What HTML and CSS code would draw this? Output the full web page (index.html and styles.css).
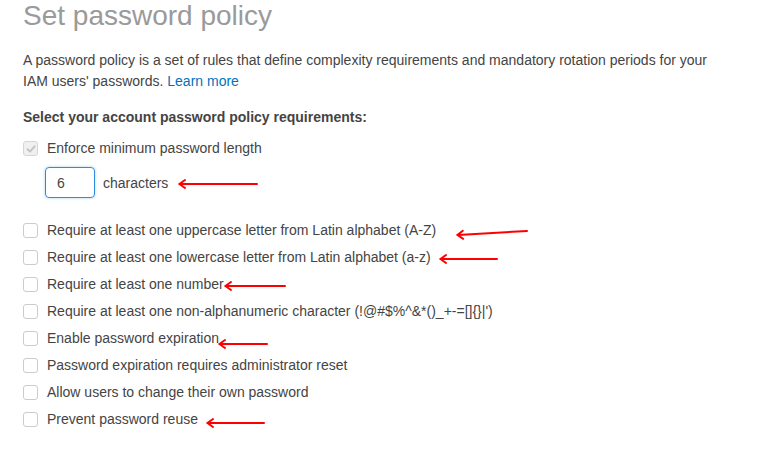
FILE: index.html
```html
<!DOCTYPE html>
<html lang="en">
<head>
<meta charset="utf-8">
<title>Set password policy</title>
<link rel="stylesheet" href="styles.css">
</head>
<body>
<main class="page">
  <h1 class="title">Set password policy</h1>
  <p class="intro">A password policy is a set of rules that define complexity requirements and mandatory rotation periods for your IAM users' passwords. <a class="link" href="#">Learn more</a></p>
  <h2 class="section">Select your account password policy requirements:</h2>

  <div class="row">
    <span class="box box-disabled">
      <svg width="12" height="12" viewBox="0 0 12 12"><path d="M2.5 6.2 L5 8.6 L9.6 3.4" fill="none" stroke="#c4c4c4" stroke-width="2" stroke-linecap="round" stroke-linejoin="round"/></svg>
    </span>
    <span class="label">Enforce minimum password length</span>
  </div>
  <div class="length-row">
    <span class="num-input">6</span>
    <span class="label">characters</span>
  </div>

  <div class="row"><span class="box"></span><span class="label">Require at least one uppercase letter from Latin alphabet (A-Z)</span></div>
  <div class="row"><span class="box"></span><span class="label">Require at least one lowercase letter from Latin alphabet (a-z)</span></div>
  <div class="row"><span class="box"></span><span class="label">Require at least one number</span></div>
  <div class="row"><span class="box"></span><span class="label">Require at least one non-alphanumeric character (!@#$%^&amp;*()_+-=[]{}|')</span></div>
  <div class="row"><span class="box"></span><span class="label">Enable password expiration</span></div>
  <div class="row"><span class="box"></span><span class="label">Password expiration requires administrator reset</span></div>
  <div class="row"><span class="box"></span><span class="label">Allow users to change their own password</span></div>
  <div class="row"><span class="box"></span><span class="label">Prevent password reuse</span></div>
</main>

<svg class="arrows" width="763" height="466" viewBox="0 0 763 466">
  <g fill="none" stroke="#f00" stroke-width="2" stroke-linecap="round" stroke-linejoin="miter">
    <path d="M257 184 L180 184"/>
    <path d="M185 180 L179.5 184 L185 188"/>

    <path d="M527 231 L458 235"/>
    <path d="M462.8 230.8 L457.5 235 L463.2 238.8"/>

    <path d="M497 259 L441 259"/>
    <path d="M446 255 L440.5 259 L446 263"/>

    <path d="M285 286 L226 286"/>
    <path d="M231 282 L225.5 286 L231 290"/>

    <path d="M267 344 L220 344"/>
    <path d="M225 340 L219.5 344 L225 348"/>

    <path d="M264 423 L208 423"/>
    <path d="M213 419 L207.5 423 L213 427"/>
  </g>
</svg>
</body>
</html>
```

FILE: styles.css
```css
html, body {
  margin: 0;
  padding: 0;
  background: #ffffff;
}

body {
  font-family: "Liberation Sans", Arial, sans-serif;
  font-size: 14px;
  color: #444444;
  position: relative;
  width: 763px;
  height: 466px;
  overflow: hidden;
}

.page {
  padding: 0 23px;
}

.title {
  margin: 0;
  font-size: 28px;
  line-height: 32px;
  font-weight: normal;
  color: #9a9a9a;
}

.intro {
  margin: 18px 0 0 0;
  max-width: 692px;
  line-height: 21px;
  color: #444444;
}

.link {
  color: #0073bb;
  text-decoration: none;
}

.section {
  margin: 15px 0 7px 0;
  font-size: 14px;
  line-height: 21px;
  font-weight: bold;
  color: #444444;
}

.row {
  display: flex;
  align-items: center;
  height: 27px;
  line-height: 27px;
}

.box {
  box-sizing: border-box;
  width: 15px;
  height: 15px;
  border: 1px solid #cccccc;
  border-radius: 3px;
  background: #ffffff;
  margin-right: 9px;
  flex: none;
  display: flex;
  align-items: center;
  justify-content: center;
}

.box-disabled {
  background: #f0f0f0;
  border-color: #d6d6d6;
}

.label {
  color: #444444;
  white-space: nowrap;
}

.length-row {
  display: flex;
  align-items: center;
  gap: 8px;
  margin: 5px 0 19px 22px;
}

.num-input {
  box-sizing: border-box;
  width: 50px;
  height: 31px;
  border: 1px solid #2f8be0;
  border-radius: 4px;
  box-shadow: 0 0 3px rgba(0, 115, 187, 0.35);
  padding-left: 11px;
  display: flex;
  align-items: center;
  color: #444444;
}

.arrows {
  position: absolute;
  left: 0;
  top: 0;
  pointer-events: none;
}
```
